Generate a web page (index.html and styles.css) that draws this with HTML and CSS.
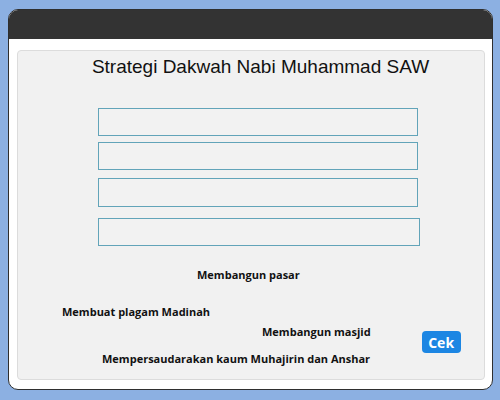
FILE: index.html
```html
<!DOCTYPE html>
<html>
<head>
<meta charset="utf-8">
<link rel="stylesheet" href="styles.css">
</head>
<body>
<div class="window">
  <div class="titlebar"></div>
  <div class="content">
    <div class="panel">
      <h1 class="title">Strategi Dakwah Nabi Muhammad SAW</h1>
      <div class="slots">
        <div class="slot s1"></div>
        <div class="slot s2"></div>
        <div class="slot s3"></div>
        <div class="slot s4"></div>
      </div>
      <div class="tray">
        <div class="chip c1">Membangun pasar</div>
        <div class="chip c2">Membuat plagam Madinah</div>
        <div class="row">
          <div class="chip c3">Membangun masjid</div>
          <button class="cek">Cek</button>
        </div>
        <div class="chip c4">Mempersaudarakan kaum Muhajirin dan Anshar</div>
      </div>
    </div>
  </div>
</div>
</body>
</html>
```
FILE: styles.css
```css
html, body {
  margin: 0;
  padding: 0;
}
body {
  background: #8cb0e2;
  width: 500px;
  height: 400px;
  overflow: hidden;
}
.window {
  margin: 9px 7px 0 8px;
  height: 381px;
  box-sizing: border-box;
  border: 1px solid #2f2f2f;
  border-radius: 10px;
  background: #ffffff;
  overflow: hidden;
}
.titlebar {
  height: 29px;
  background: #333333;
}
.content {
  padding: 11px 7px 8px 8px;
}
.panel {
  height: 330px;
  box-sizing: border-box;
  border: 1px solid #dcdcdc;
  border-radius: 4px;
  background: #f1f1f1;
}
.title {
  margin: 4px 0 0 19px;
  font-family: "Liberation Sans", sans-serif;
  font-weight: normal;
  font-size: 19px;
  line-height: 24px;
  text-align: center;
  color: #111;
}
.slots {
  display: flex;
  flex-direction: column;
  padding-left: 80px;
  margin-top: 29px;
}
.slot {
  width: 320px;
  height: 28px;
  box-sizing: border-box;
  border: 1px solid #62a4b9;
  background: #f2f2f2;
}
.s2 { margin-top: 6px; }
.s3 { margin-top: 8px; height: 29px; }
.s4 { margin-top: 11px; width: 322px; }
.tray {
  font-family: "Open Sans", sans-serif;
  font-weight: bold;
  font-size: 11px;
  color: #111;
}
.chip {
  width: max-content;
  line-height: 14px;
}
.c1 { margin: 22px 0 0 179px; }
.c2 { margin: 23px 0 0 44px; }
.row {
  display: flex;
  align-items: flex-start;
  margin-top: 6px;
}
.c3 { margin-left: 244px; }
.cek {
  margin: 6px 0 -4px 51px;
  width: 39px;
  height: 22px;
  border: none;
  border-radius: 4px;
  background: #1c86e3;
  color: #fff;
  font-family: "Open Sans", sans-serif;
  font-weight: bold;
  font-size: 14px;
  padding: 0;
}
.c4 { margin: 3px 0 0 84px; }
```
